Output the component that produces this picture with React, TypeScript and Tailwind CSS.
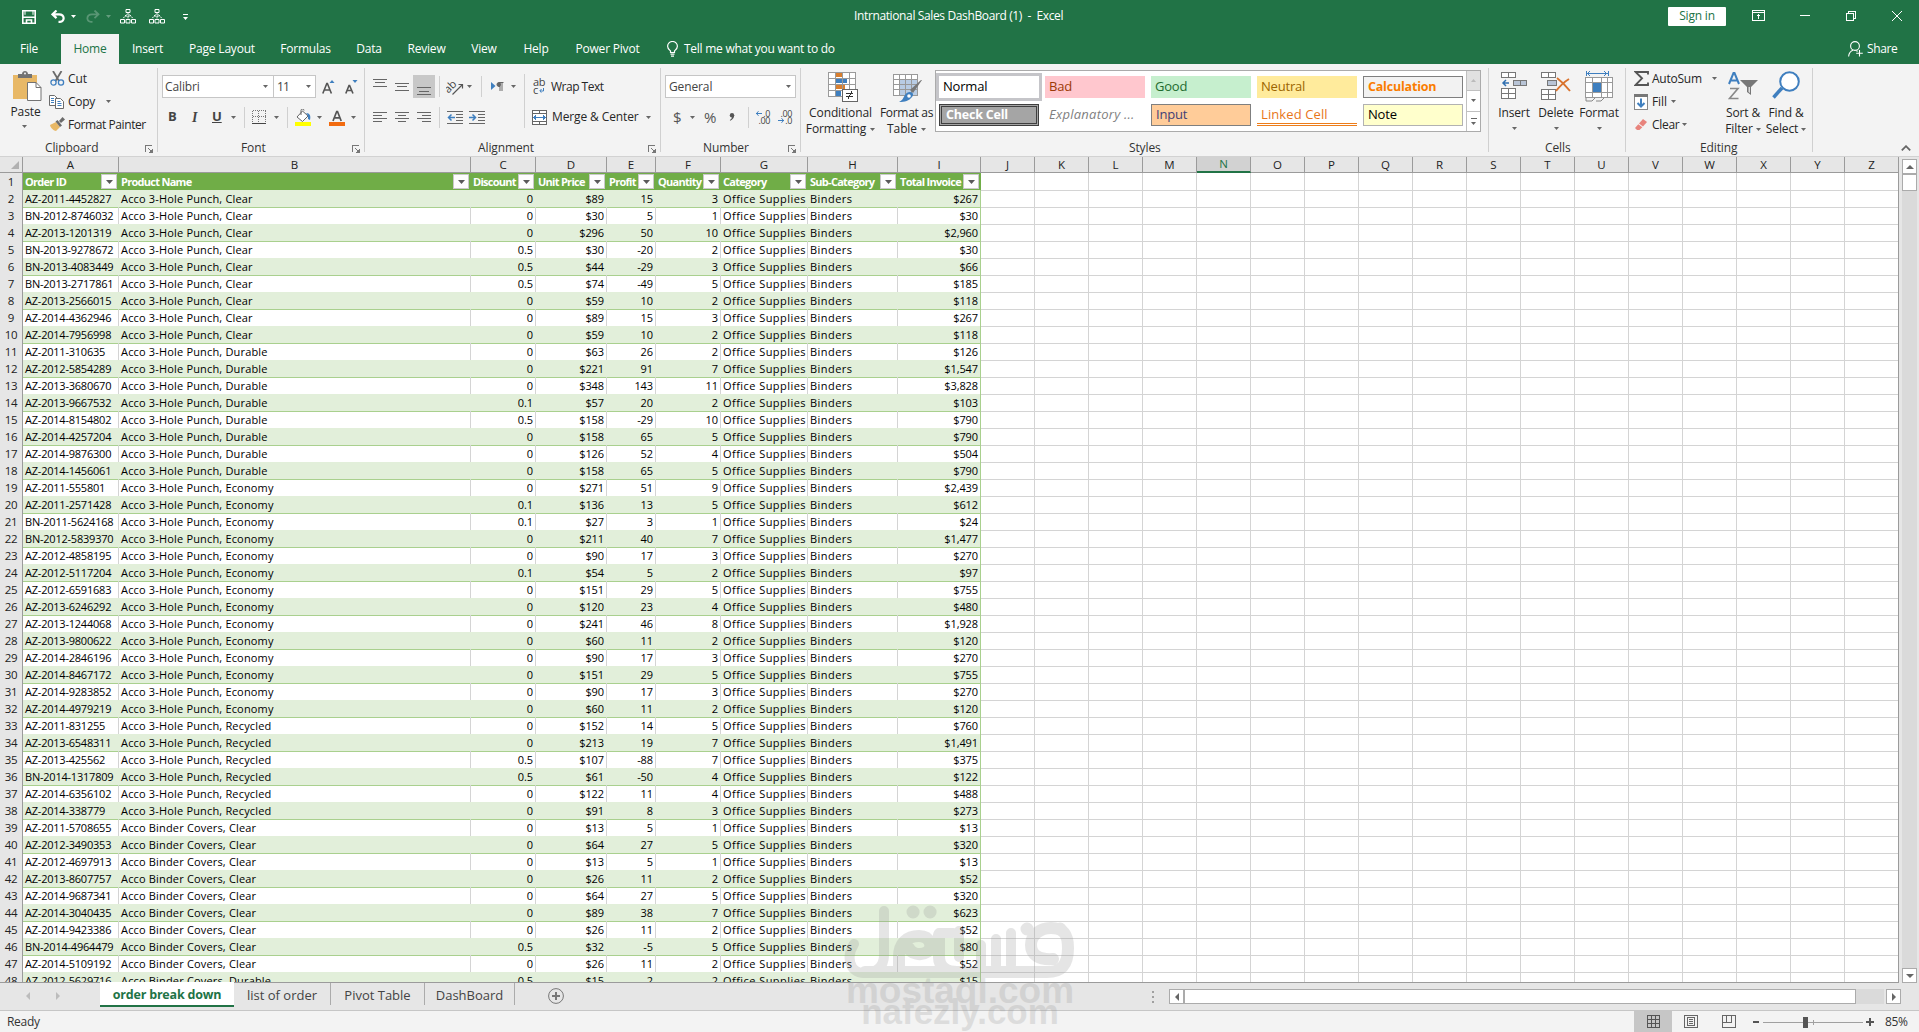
import React from "react";

type Row = [string, string, string, string, string, string, string];

const P = "Acco 3-Hole Punch, ";
const C = "Acco Binder Covers, ";

const DATA: Row[] = [
  ["AZ-2011-4452827", P + "Clear", "0", "$89", "15", "3", "$267"],
  ["BN-2012-8746032", P + "Clear", "0", "$30", "5", "1", "$30"],
  ["AZ-2013-1201319", P + "Clear", "0", "$296", "50", "10", "$2,960"],
  ["BN-2013-9278672", P + "Clear", "0.5", "$30", "-20", "2", "$30"],
  ["BN-2013-4083449", P + "Clear", "0.5", "$44", "-29", "3", "$66"],
  ["BN-2013-2717861", P + "Clear", "0.5", "$74", "-49", "5", "$185"],
  ["AZ-2013-2566015", P + "Clear", "0", "$59", "10", "2", "$118"],
  ["AZ-2014-4362946", P + "Clear", "0", "$89", "15", "3", "$267"],
  ["AZ-2014-7956998", P + "Clear", "0", "$59", "10", "2", "$118"],
  ["AZ-2011-310635", P + "Durable", "0", "$63", "26", "2", "$126"],
  ["AZ-2012-5854289", P + "Durable", "0", "$221", "91", "7", "$1,547"],
  ["AZ-2013-3680670", P + "Durable", "0", "$348", "143", "11", "$3,828"],
  ["AZ-2013-9667532", P + "Durable", "0.1", "$57", "20", "2", "$103"],
  ["AZ-2014-8154802", P + "Durable", "0.5", "$158", "-29", "10", "$790"],
  ["AZ-2014-4257204", P + "Durable", "0", "$158", "65", "5", "$790"],
  ["AZ-2014-9876300", P + "Durable", "0", "$126", "52", "4", "$504"],
  ["AZ-2014-1456061", P + "Durable", "0", "$158", "65", "5", "$790"],
  ["AZ-2011-555801", P + "Economy", "0", "$271", "51", "9", "$2,439"],
  ["AZ-2011-2571428", P + "Economy", "0.1", "$136", "13", "5", "$612"],
  ["BN-2011-5624168", P + "Economy", "0.1", "$27", "3", "1", "$24"],
  ["BN-2012-5839370", P + "Economy", "0", "$211", "40", "7", "$1,477"],
  ["AZ-2012-4858195", P + "Economy", "0", "$90", "17", "3", "$270"],
  ["AZ-2012-5117204", P + "Economy", "0.1", "$54", "5", "2", "$97"],
  ["AZ-2012-6591683", P + "Economy", "0", "$151", "29", "5", "$755"],
  ["AZ-2013-6246292", P + "Economy", "0", "$120", "23", "4", "$480"],
  ["AZ-2013-1244068", P + "Economy", "0", "$241", "46", "8", "$1,928"],
  ["AZ-2013-9800622", P + "Economy", "0", "$60", "11", "2", "$120"],
  ["AZ-2014-2846196", P + "Economy", "0", "$90", "17", "3", "$270"],
  ["AZ-2014-8467172", P + "Economy", "0", "$151", "29", "5", "$755"],
  ["AZ-2014-9283852", P + "Economy", "0", "$90", "17", "3", "$270"],
  ["AZ-2014-4979219", P + "Economy", "0", "$60", "11", "2", "$120"],
  ["AZ-2011-831255", P + "Recycled", "0", "$152", "14", "5", "$760"],
  ["AZ-2013-6548311", P + "Recycled", "0", "$213", "19", "7", "$1,491"],
  ["AZ-2013-425562", P + "Recycled", "0.5", "$107", "-88", "7", "$375"],
  ["BN-2014-1317809", P + "Recycled", "0.5", "$61", "-50", "4", "$122"],
  ["AZ-2014-6356102", P + "Recycled", "0", "$122", "11", "4", "$488"],
  ["AZ-2014-338779", P + "Recycled", "0", "$91", "8", "3", "$273"],
  ["AZ-2011-5708655", C + "Clear", "0", "$13", "5", "1", "$13"],
  ["AZ-2012-3490353", C + "Clear", "0", "$64", "27", "5", "$320"],
  ["AZ-2012-4697913", C + "Clear", "0", "$13", "5", "1", "$13"],
  ["AZ-2013-8607757", C + "Clear", "0", "$26", "11", "2", "$52"],
  ["AZ-2014-9687341", C + "Clear", "0", "$64", "27", "5", "$320"],
  ["AZ-2014-3040435", C + "Clear", "0", "$89", "38", "7", "$623"],
  ["AZ-2014-9423386", C + "Clear", "0", "$26", "11", "2", "$52"],
  ["BN-2014-4964479", C + "Clear", "0.5", "$32", "-5", "5", "$80"],
  ["AZ-2014-5109192", C + "Clear", "0", "$26", "11", "2", "$52"],
  ["AZ-2012-5629716", C + "Durable", "0.5", "$15", "-2", "2", "$15"],
];

const HEADERS = ["Order ID", "Product Name", "Discount", "Unit Price", "Profit", "Quantity", "Category", "Sub-Category", "Total Invoice"];
const LETTERS = "ABCDEFGHIJKLMNOPQRSTUVWXYZ".split("");
const GRID = "grid grid-cols-[23px_96px_352px_65px_71px_49px_65px_87px_90px_83px_repeat(17,54px)]";

const Caret = ({ className = "" }: { className?: string }) => (
  <svg className={"h-[3px] w-[5px] shrink-0 text-[#666] " + className} viewBox="0 0 5 3" fill="currentColor">
    <path d="M0 0h5L2.5 3z" />
  </svg>
);

const VSep = ({ className }: { className: string }) => <div className={"w-px shrink-0 bg-[#d0d0d0] " + className} />;

const Launcher = ({ className = "" }: { className?: string }) => (
  <svg className={"size-[8px] shrink-0 " + className} viewBox="0 0 8 8" fill="none" stroke="#777" shapeRendering="crispEdges">
    <path d="M.5 6.5v-6h6" />
    <path d="M3 3l3 3M7.5 3.500v4h-4" />
    <path d="M5 7h2V5z" fill="#777" />
  </svg>
);

function Group({ width, label, labelPad, launcher, children }: { width: string; label: string; labelPad: string; launcher?: boolean; children: React.ReactNode }) {
  return (
    <section className={"flex h-[92px] shrink-0 " + width}>
      <div className="flex min-w-0 flex-1 flex-col">
        <div className="h-[76px]">{children}</div>
        <div className={"flex h-[16px] items-center " + labelPad}>
          <span className="whitespace-nowrap text-[#333]">{label}</span>
          {launcher && <Launcher className="ml-auto mr-[4px] mt-[2px]" />}
        </div>
      </div>
      <div className="mt-[4px] h-[84px] w-px bg-[#d0d0d0]" />
    </section>
  );
}

const QatTree = ({ className }: { className: string }) => (
  <svg className={"h-[15px] w-[16px] shrink-0 " + className} viewBox="0 0 16 15" fill="none" stroke="#fff">
    <path d="M6 .5h4v3H6zM.5 10.500h4v3.500h-4zM6 10.500h4v3.500H6zM11.500 10.500h4v3.500h-4z" />
    <path d="M8 4v6M6.500 5.500L3 9.500M9.500 5.500L13 9.500M5 7h6" strokeDasharray="2 .8" />
  </svg>
);

function TitleBar() {
  return (
    <div className="flex h-[32px] items-center text-white">
      <svg className="ml-[22px] mt-[2px] size-[14px]" viewBox="0 0 14 14" fill="none" stroke="#fff" strokeWidth="1.600">
        <path d="M.8.8h12.400v12.400H.8z" />
        <path d="M1 7.200h12M4.500 13V10h5v3" />
        <path d="M3 .8v4M11 .8v4" strokeWidth="1" />
      </svg>
      <svg className="ml-[15px] h-[13px] w-[14px]" viewBox="0 0 14 13" fill="none" stroke="#fff" strokeWidth="2.200">
        <path d="M5.500.5L1.500 4.300l4 3.800M2 4.300h6c6 0 6 7.500 1 7.500H7.500" />
      </svg>
      <Caret className="ml-[6px] text-white" />
      <svg className="ml-[10px] h-[13px] w-[14px] opacity-25" viewBox="0 0 14 13" fill="none" stroke="#fff" strokeWidth="1.800">
        <path d="M8.500.5l4 3.800-4 3.800M12 4.300H6c-6 0-6 7.500-1 7.500h1.500" />
      </svg>
      <Caret className="ml-[6px] text-white opacity-30" />
      <QatTree className="ml-[9px]" />
      <QatTree className="ml-[13px]" />
      <svg className="ml-[18px] mt-[2px] h-[6px] w-[5px]" viewBox="0 0 5 6" fill="#fff">
        <path d="M0 0h5v1H0zM0 3h5L2.500 6z" />
      </svg>
      <div className="ml-[666px] w-[213px] whitespace-pre text-[12px] tracking-[-0.37px]">Intrnational Sales DashBoard (1)  -  Excel</div>
      <div className="ml-[601px] flex h-[19px] w-[58px] items-center justify-center rounded-[1px] bg-white text-[12px] tracking-[-0.2px] text-[#217346]">Sign in</div>
      <svg className="-mt-px ml-[26px] h-[11px] w-[13px]" viewBox="0 0 13 11" fill="none" stroke="#fff" shapeRendering="crispEdges">
        <path d="M.5.5h12v10H.5zM.5 2.500h12M6.500 4v5" />
        <path d="M4.500 6.500l2-2 2 2" />
      </svg>
      <svg className="-mt-px ml-[35px] h-[11px] w-[10px]" viewBox="0 0 10 11" stroke="#fff" shapeRendering="crispEdges"><path d="M0 5.500h10" /></svg>
      <svg className="-mt-px ml-[36px] size-[10px]" viewBox="0 0 10 10" fill="none" stroke="#fff" shapeRendering="crispEdges"><path d="M.5 2.500h7v7h-7zM2.500 2V.5h7v7H8" /></svg>
      <svg className="-mt-px ml-[36px] size-[10px]" viewBox="0 0 10 10" fill="none" stroke="#fff"><path d="M0 0l10 10M10 0L0 10" /></svg>
    </div>
  );
}

const TABS: [string, string][] = [
  ["Insert", "w-[57px]"],
  ["Page Layout", "w-[92px]"],
  ["Formulas", "w-[75px]"],
  ["Data", "w-[52px]"],
  ["Review", "w-[63px]"],
  ["View", "w-[52px]"],
  ["Help", "w-[52px]"],
  ["Power Pivot", "w-[91px]"],
];

function TabBar() {
  return (
    <div className="flex h-[32px] items-center pt-px text-[12px] tracking-[-0.2px] text-white">
      <div className="w-[61px] pr-[3px] text-center">File</div>
      <div className="mt-[1px] flex h-[30px] w-[58px] items-center justify-center self-start bg-[#f3f3f3] text-[#217346]">Home</div>
      {TABS.map(([t, w]) => (
        <div key={t} className={"whitespace-nowrap text-center " + w}>{t}</div>
      ))}
      <svg className="ml-[14px] h-[16px] w-[11px]" viewBox="0 0 11 16" fill="none" stroke="#fff" strokeWidth="1.200">
        <path d="M3.500 11.500V10C2 8.500.6 7.500.6 5.200a4.900 4.700 0 019.800 0c0 2.300-1.400 3.300-2.900 4.800v1.500zM3.500 13.200h4M4 15.200h3" />
      </svg>
      <div className="ml-[6px] w-[160px] whitespace-nowrap tracking-[-0.26px]">Tell me what you want to do</div>
      <svg className="ml-[1004px] h-[16px] w-[15px]" viewBox="0 0 15 16" fill="none" stroke="#fff" strokeWidth="1.100">
        <circle cx="7" cy="5" r="4.400" />
        <path d="M.6 15.500C1 11.500 3 10 5 9.300M8.500 9.500l1 1M11.500 9v6.500M8.200 12.300h6.600" />
      </svg>
      <div className="ml-[4px] tracking-[-0.4px]">Share</div>
    </div>
  );
}

function ClipboardGroup() {
  return (
    <Group width="w-[158px]" label="Clipboard" labelPad="pl-[45px]" launcher>
      <div className="flex pt-[3px]">
        <div className="flex w-[49px] flex-col items-center pt-[4px]">
          <svg className="ml-[5px] h-[31px] w-[29px]" viewBox="0 0 29 31">
            <path d="M0 4h24v24H0z" fill="#e8b866" />
            <path d="M5 7V3h4c0-4 6-4 6 0h4v4z" fill="#737373" />
            <circle cx="12" cy="2.500" r="1" fill="#f3f3f3" />
            <path d="M14.500 11.500h8.500l5 5v13H14.500z" fill="#fff" stroke="#737373" />
            <path d="M23 11.500v5h5" fill="none" stroke="#737373" />
          </svg>
          <span className="ml-[2px] mt-[2px] h-[17px] leading-[16px]">Paste</span>
          <Caret className="mt-[4px]" />
        </div>
        <div className="flex-1">
          <div className="flex h-[23px] items-center">
            <svg className="ml-[1px] size-[15px]" viewBox="0 0 15 15" fill="none">
              <path d="M3 0l6 10M11.500 0l-6 10" stroke="#6b6b6b" strokeWidth="1.800" />
              <circle cx="3.500" cy="11.500" r="2.600" stroke="#3f7fbf" strokeWidth="1.300" />
              <circle cx="11" cy="11.500" r="2.600" stroke="#3f7fbf" strokeWidth="1.300" />
            </svg>
            <span className="ml-[3px]">Cut</span>
          </div>
          <div className="flex h-[23px] items-center">
            <svg className="h-[14px] w-[15px]" viewBox="0 0 15 14" fill="#fff" stroke="#6b6b6b">
              <path d="M.5.5h5l3 3v7h-8z" />
              <path d="M6.500 3.500h5l3 3v7h-8z" />
              <path d="M2 3.500h3M2 5.500h3M2 7.500h3M8.500 6.500h3M8.500 8.500h4M8.500 10.500h4" stroke="#3f7fbf" />
            </svg>
            <span className="ml-[4px] w-[38px] tracking-[-0.3px]">Copy</span>
            <Caret />
          </div>
          <div className="flex h-[23px] items-center">
            <svg className="ml-[1px] size-[15px]" viewBox="0 0 15 15">
              <path d="M0 8l6-3 4 5-4 4c-2-.5-5-2-6-6z" fill="#e8b866" />
              <path d="M5.500 4.500l2-1.500 4.500 5.500-2 1.500z" fill="#6b6b6b" />
              <path d="M9 4l3.500-4 2.500 2.500-4 3.500z" fill="#6b6b6b" />
            </svg>
            <span className="ml-[3px] whitespace-nowrap tracking-[-0.42px]">Format Painter</span>
          </div>
        </div>
      </div>
    </Group>
  );
}

function FontGroup() {
  return (
    <Group width="w-[207px]" label="Font" labelPad="pl-[83px]" launcher>
      <div className="flex h-[34px] items-center pl-[4px] pt-[11px] text-[#444]">
        <div className="flex h-[23px] w-[112px] items-center border border-[#c6c6c6] bg-white pl-[2px] pr-[5px]">
          <span className="flex-1">Calibri</span><Caret />
        </div>
        <div className="-ml-px flex h-[23px] w-[43px] items-center border border-[#c6c6c6] bg-white pl-[3px] pr-[4px]">
          <span className="flex-1 tracking-[-0.9px]">11</span><Caret />
        </div>
        <svg className="ml-[6px] h-[14px] w-[13px]" viewBox="0 0 13 14">
          <path d="M.8 13.500L4.800 3.500h.6l4 10M2.300 10h5.500" fill="none" stroke="#555" strokeWidth="1.600" />
          <path d="M7.500 3h5L10 0z" fill="#3f7fbf" />
        </svg>
        <svg className="ml-[10px] h-[14px] w-[13px]" viewBox="0 0 13 14">
          <path d="M.8 13.500L4 5.500h.6l3.400 8M2 10.500h4.500" fill="none" stroke="#555" strokeWidth="1.600" />
          <path d="M7.500 0h5L10 3z" fill="#3f7fbf" />
        </svg>
      </div>
      <div className="mt-[8px] flex h-[22px] items-center pl-[10px] text-[13px] text-[#444]">
        <b className="w-[22px]">B</b>
        <i className="w-[22px] pl-[2px] font-['Liberation_Serif'] text-[14px] font-bold">I</i>
        <b className="w-[19px] underline">U</b>
        <Caret />
        <VSep className="ml-[8px] h-[21px]" />
        <svg className="ml-[7px] size-[14px]" viewBox="0 0 14 14" stroke="#777" fill="none" shapeRendering="crispEdges">
          <path d="M.5.500h13M.5 6.500h13M.5.500v13M6.500.5v13M13.500.5v13" strokeDasharray="1 1" />
          <path d="M0 13.500h14" stroke="#444" />
        </svg>
        <Caret className="ml-[8px]" />
        <VSep className="ml-[8px] h-[21px]" />
        <svg className="ml-[7px] h-[17px] w-[17px]" viewBox="0 0 17 17">
          <path d="M2 8l5.500-6 5.500 5-5.500 5.500z" fill="#fff" stroke="#666" />
          <path d="M6 6V1.500a1.500 1.500 0 013 0" fill="none" stroke="#666" />
          <path d="M11 4c4 0 5 3 4 7l-2-1c0-3 0-4-2-6z" fill="#3f7fbf" />
          <path d="M0 13h16v4H0z" fill="#ffff00" />
        </svg>
        <Caret className="ml-[5px]" />
        <svg className="ml-[7px] h-[17px] w-[16px]" viewBox="0 0 16 17">
          <path d="M4 12L7.700 2.500h.8L12.200 12M5.500 8.800h5.200" fill="none" stroke="#555" strokeWidth="1.700" />
          <path d="M0 13h16v4H0z" fill="#f26b0f" />
        </svg>
        <Caret className="ml-[6px]" />
      </div>
    </Group>
  );
}

const Lines = ({ d, className }: { d: string; className: string }) => (
  <svg className={"h-[22px] w-[14px] shrink-0 " + className} viewBox="0 0 14 22" stroke="#666" shapeRendering="crispEdges"><path d={d} /></svg>
);

const Indent = ({ flip, className }: { flip?: boolean; className: string }) => (
  <svg className={"h-[13px] w-[16px] shrink-0 " + className} viewBox="0 0 16 13" fill="none">
    <path d="M0 .5h16M9 3.500h7M9 6.500h7M9 9.500h7M0 12.500h16" stroke="#666" />
    <path d={flip ? "M0 6.500h6.500M3.500 3.500l3 3-3 3" : "M1 6.500h7M4.500 3.500l-3 3 3 3"} stroke="#3f7fbf" strokeWidth="1.500" />
  </svg>
);

function AlignmentGroup() {
  return (
    <Group width="w-[296px]" label="Alignment" labelPad="pl-[113px]" launcher>
      <div className="flex">
        <div className="w-[159px]">
          <div className="flex h-[34px] items-center pt-[11px]">
            <Lines className="ml-[8px]" d="M0 3.500h14M2 6.500h10M0 10.500h14" />
            <Lines className="ml-[8px]" d="M0 7.500h14M2 10.500h10M0 14.500h14" />
            <div className="ml-[4px] flex h-[23px] w-[22px] items-center justify-center bg-[#c8c8c8]">
              <Lines className="" d="M0 11.500h14M2 15.500h10M0 18.500h14" />
            </div>
            <VSep className="ml-[4px] h-[21px]" />
            <svg className="ml-[6px] h-[16px] w-[18px]" viewBox="0 0 18 16" fill="none" stroke="#555" strokeWidth="1.200">
              <text x="-1" y="11" fontSize="11" fill="#444" stroke="none" transform="rotate(-45 5 9)">ab</text>
              <path d="M6.500 15.500L16.500 5.500M12.500 5.500h4v4" />
            </svg>
            <Caret className="ml-[3px]" />
            <VSep className="ml-[9px] h-[21px]" />
            <svg className="ml-[9px] h-[10px] w-[13px]" viewBox="0 0 13 10">
              <path d="M0 0l4.500 4L0 8z" fill="#3f7fbf" />
              <path d="M12.500.5H8a2 2 0 000 4h1M9 .5V9M11 .5V9" stroke="#666" fill="none" />
              <circle cx="8" cy="2.500" r="2" fill="#666" />
            </svg>
            <Caret className="ml-[7px]" />
          </div>
          <div className="mt-[8px] flex h-[22px] items-center">
            <Lines className="ml-[8px]" d="M0 6.500h14M0 9.500h9M0 12.500h14M0 15.500h9" />
            <Lines className="ml-[8px]" d="M0 6.500h14M3 9.500h8M0 12.500h14M3 15.500h8" />
            <Lines className="ml-[8px]" d="M0 6.500h14M5 9.500h9M0 12.500h14M5 15.500h9" />
            <VSep className="ml-[8px] h-[21px]" />
            <Indent className="ml-[7px]" />
            <Indent className="ml-[6px]" flip />
          </div>
        </div>
        <VSep className="mt-[10px] h-[54px]" />
        <div>
          <div className="mt-[11px] flex h-[23px] items-center">
            <div className="ml-[8px] flex h-[18px] w-[15px] flex-col text-[11px] leading-[8px] text-[#444]">
              <span className="tracking-[-0.3px]">ab</span>
              <span className="flex items-center">c
                <svg className="ml-[1px] mt-[2px] size-[5px]" viewBox="0 0 5 5" fill="none" stroke="#3f7fbf"><path d="M4.500 0v3H1M2.500 1L.8 3l1.700 1.700" /></svg>
              </span>
            </div>
            <span className="ml-[3px] whitespace-nowrap tracking-[-0.5px]">Wrap Text</span>
          </div>
          <div className="mt-[8px] flex h-[22px] items-center">
            <svg className="ml-[7px] size-[15px]" viewBox="0 0 15 15" fill="none" stroke="#666" shapeRendering="crispEdges">
              <path d="M.5.500h14v14H.5zM.5 3.500h14M.5 11.500h14M7.500.5v3M7.500 11.500v3" fill="#fff" />
              <path d="M2 7.500h11M4 5.500l-2 2 2 2M11 5.500l2 2-2 2" stroke="#3f7fbf" />
            </svg>
            <span className="ml-[5px] w-[94px] whitespace-nowrap">Merge &amp; Center</span>
            <Caret />
          </div>
        </div>
      </div>
    </Group>
  );
}

const Decimals = ({ more, className }: { more?: boolean; className: string }) => (
  <div className={"flex w-[15px] flex-col text-[9px] leading-[7px] tracking-[-0.4px] text-[#444] " + className}>
    <span className="flex items-center justify-end">
      {!more && <svg className="mr-[1px] h-[5px] w-[6px]" viewBox="0 0 6 5" fill="none" stroke="#3f7fbf"><path d="M0 2.500h6M2.500.2L.5 2.500l2 2.300" /></svg>}
      {more ? ".00" : ".0"}
    </span>
    <span className="flex items-center justify-end">
      {more && <svg className="mr-[1px] h-[5px] w-[6px]" viewBox="0 0 6 5" fill="none" stroke="#3f7fbf"><path d="M0 2.500h6M3.500.2l2 2.300-2 2.300" /></svg>}
      {more ? ".0" : ".00"}
    </span>
  </div>
);

function NumberGroup() {
  return (
    <Group width="w-[140px]" label="Number" labelPad="pl-[42px]" launcher>
      <div className="ml-[4px] pt-[11px]">
        <div className="flex h-[23px] w-[131px] items-center border border-[#c6c6c6] bg-white pl-[3px] pr-[4px] text-[#444]">
          <span className="flex-1">General</span><Caret />
        </div>
      </div>
      <div className="mt-[8px] flex h-[22px] items-center pl-[12px] text-[#555]">
        <span className="w-[17px] text-[15px]">$</span>
        <Caret />
        <span className="ml-[9px] w-[25px] text-[15px]">%</span>
        <svg className="h-[8px] w-[6px]" viewBox="0 0 6 8"><circle cx="3" cy="2.200" r="2.200" fill="#555" /><path d="M5.200 2c0 3-1.500 4.500-4 5.800L.8 7C2.500 6 3 5 3 3.500z" fill="#555" /></svg>
        <VSep className="ml-[13px] h-[21px]" />
        <Decimals className="ml-[6px]" />
        <Decimals className="ml-[7px]" more />
      </div>
    </Group>
  );
}

function StylesGroup() {
  const base = "flex h-[22px] w-[100px] items-center whitespace-nowrap pl-[4px] ";
  return (
    <Group width="w-[688px]" label="Styles" labelPad="pl-[328px]">
      <div className="flex">
        <div className="flex w-[74px] flex-col items-center pl-[5px] pt-[8px] leading-[16px]">
          <svg className="ml-[4px] size-[30px]" viewBox="0 0 30 30" shapeRendering="crispEdges">
            <path d="M0 0h28v25H0z" fill="#fff" />
            <path d="M8 0h7v5H8z" fill="#d97f2e" /><path d="M8 7h11v4H8z" fill="#3f7fbf" /><path d="M8 13h9v4H8z" fill="#d97f2e" /><path d="M8 19h5v5H8z" fill="#3f7fbf" />
            <path d="M.5.500h27v24H.5zM.5 6.500h27M.5 12.500h27M.5 18.500h27M7.500.5v24M14.500.5v24M21.500.5v24" fill="none" stroke="#9a9a9a" />
            <path d="M14.500 17.500h15v12h-15z" fill="#fff" stroke="#666" />
            <path d="M18 21.500h7M18 24.500h7M24 19.500l-4 7" stroke="#333" />
          </svg>
          <span className="mt-[3px] whitespace-nowrap">Conditional</span>
          <span className="flex items-center whitespace-nowrap">Formatting<Caret className="ml-[4px]" /></span>
        </div>
        <div className="flex w-[60px] flex-col items-center pl-[3px] pt-[8px] leading-[16px]">
          <svg className="ml-[2px] size-[30px]" viewBox="0 0 30 30">
            <path d="M.5 2.500h24v21H.5z" fill="#fff" />
            <path d="M7 8h17v15H7z" fill="#b8cce4" />
            <path d="M.5 2.500h24v21H.5zM.5 7.500h24M.5 12.500h24M.5 17.500h24M6.500 2.500v21M12.500 2.500v21M18.500 2.500v21" fill="none" stroke="#999" shapeRendering="crispEdges" />
            <path d="M29 8l-9 13-3-3L28 8z" fill="#777" />
            <path d="M17 20c3 0 4 3 2 5-3 4-7 5-13 5 4-2 4-4 6-7 1-2 3-3 5-3z" fill="#3f7fbf" />
            <circle cx="16" cy="24" r="1.800" fill="#fff" />
          </svg>
          <span className="mt-[3px] whitespace-nowrap tracking-[-0.3px]">Format as</span>
          <span className="flex items-center">Table<Caret className="ml-[4px]" /></span>
        </div>
        <div className="mt-[6px] flex h-[62px] w-[546px] border border-[#ababab] bg-white text-[13px] tracking-[-0.2px]">
          <div className="grid flex-1 grid-cols-[repeat(5,100px)] grid-rows-[22px_22px] gap-x-[6px] gap-y-[6px] pl-[3px] pt-[5px]">
            <div className={base + "bg-white text-black outline-3 outline-[#c5c5c9]"}>Normal</div>
            <div className={base + "bg-[#ffc7ce] text-[#9c3a06]"}>Bad</div>
            <div className={base + "bg-[#c6efce] text-[#1e6b2e]"}>Good</div>
            <div className={base + "bg-[#ffeb9c] text-[#9c6500]"}>Neutral</div>
            <div className={base + "border border-[#7f7f7f] bg-[#f2f2f2] pl-[3px] text-[12.500px] font-bold text-[#fa7d00]"}>Calculation</div>
            <div className={base + "border-3 border-double border-[#3f3f3f] bg-[#a5a5a5] pl-[1px] text-[12.500px] font-bold text-white"}>Check Cell</div>
            <div className={base + "italic tracking-[0.25px] text-[#7f7f7f]"}>Explanatory ...</div>
            <div className={base + "border border-[#7f7f7f] bg-[#ffcc99] pl-[3px] text-[#3f3f76]"}>Input</div>
            <div className={base + "border-b-3 border-double border-[#ed7d1a] pt-[3px] tracking-[0.1px] text-[#e8761a]"}>Linked Cell</div>
            <div className={base + "border border-[#b2b2b2] bg-[#ffffcc] pl-[3px] text-black"}>Note</div>
          </div>
          <div className="flex w-[14px] flex-col border-l border-[#c0c0c0]">
            <div className="flex flex-1 items-center justify-center bg-[#e1e1e1]"><Caret className="rotate-180 opacity-30" /></div>
            <div className="flex flex-1 items-center justify-center border-y border-[#c0c0c0]"><Caret /></div>
            <div className="flex flex-1 flex-col items-center justify-center gap-[3px]"><div className="h-px w-[6px] bg-[#666]" /><Caret /></div>
          </div>
        </div>
      </div>
    </Group>
  );
}

function BigButton({ icon, lines, width }: { icon: React.ReactNode; lines: [string, string?]; width: string }) {
  return (
    <div className={"flex shrink-0 flex-col items-center pt-[6px] leading-[16px] " + width}>
      <div className="h-[32px]">{icon}</div>
      <span className="mt-[3px] whitespace-nowrap">{lines[0]}</span>
      {lines[1] ? (
        <span className="flex items-center whitespace-nowrap">{lines[1]}<Caret className="ml-[3px]" /></span>
      ) : (
        <Caret className="mt-[6px]" />
      )}
    </div>
  );
}

function CellsGroup() {
  return (
    <Group width="w-[137px]" label="Cells" labelPad="pl-[56px]">
      <div className="flex pl-[4px]">
        <BigButton width="w-[42px]" lines={["Insert"]} icon={
          <svg className="mt-[2px] h-[28px] w-[27px]" viewBox="0 0 27 28" fill="#fff" stroke="#777" shapeRendering="crispEdges">
            <path d="M.5.500h14v5H.5zM7.500.5v5M.5 16.500h14v10H.5zM.5 21.500h14M7.500 16.500v10" />
            <path d="M12.500 8.500h13v5h-13zM19.500 8.500v5" fill="#b8c4d6" />
            <path d="M2 11h6M5 8l-3 3 3 3" fill="none" stroke="#2f6fb0" strokeWidth="1.500" shapeRendering="auto" />
          </svg>} />
        <BigButton width="w-[42px]" lines={["Delete"]} icon={
          <svg className="mt-[2px] h-[28px] w-[30px]" viewBox="0 0 30 28" fill="#fff" stroke="#777" shapeRendering="crispEdges">
            <path d="M.5.500h14v5H.5zM7.500.5v5M.5 17.500h14v10H.5zM.5 22.500h14M7.500 17.500v10" />
            <path d="M6.500 8.500h9v5h-9z" fill="#b8c4d6" />
            <path d="M16 6c4 3 9 8 13 13M28 7c-5 3-9 7-13 12" fill="none" stroke="#d9732e" strokeWidth="1.900" shapeRendering="auto" />
          </svg>} />
        <BigButton width="w-[44px]" lines={["Format"]} icon={
          <svg className="h-[32px] w-[29px]" viewBox="0 0 29 32" fill="none" stroke="#999" shapeRendering="crispEdges">
            <path d="M1 1v5M23 1v5M3 3.500h18M5 1.500l-3 2 3 2M19 1.500l3 2-3 2" stroke="#3f7fbf" />
            <path d="M.5 7.500h27v20H.5zM.5 12.500h27M.5 22.500h27M7.500 7.500v20M16.500 7.500v20M22.500 7.500v20" fill="#fff" />
            <path d="M8 13h8v9H8z" fill="#3f7fbf" stroke="none" />
            <path d="M1 28v3h6l3-3M11 31h5l3-3" stroke="#888" shapeRendering="auto" />
          </svg>} />
      </div>
    </Group>
  );
}

function EditingGroup() {
  return (
    <Group width="w-[187px]" label="Editing" labelPad="pl-[74px]">
      <div className="flex">
        <div className="w-[96px] pl-[8px] pt-[3px]">
          <div className="flex h-[23px] items-center">
            <svg className="h-[15px] w-[15px] shrink-0" viewBox="0 0 15 15" fill="none" stroke="#555" strokeWidth="1.900"><path d="M14 3.500V1H1.500L8 7.300 1.500 14H14v-2.500" /></svg>
            <span className="ml-[3px] w-[60px] tracking-[-0.25px]">AutoSum</span>
            <Caret />
          </div>
          <div className="flex h-[23px] items-center">
            <svg className="h-[16px] w-[14px]" viewBox="0 0 14 16" shapeRendering="crispEdges">
              <path d="M.5 2.500h13v13H.5z" fill="#fff" stroke="#888" /><path d="M0 0h14v3H0z" fill="#777" />
              <path d="M7 4.500v8M3.500 9L7 12.500 10.500 9" fill="none" stroke="#3f7fbf" strokeWidth="2" shapeRendering="auto" />
            </svg>
            <span className="ml-[4px]">Fill</span><Caret className="ml-[4px]" />
          </div>
          <div className="flex h-[23px] items-center">
            <svg className="h-[14px] w-[14px]" viewBox="0 0 14 14"><path d="M9 1l4 3-4 4.500-4-3z" fill="#e8837c" /><path d="M4.300 6.200l4 3L5.500 12H3L1 10z" fill="#e8837c" /></svg>
            <span className="ml-[4px] tracking-[-0.3px]">Clear</span><Caret className="ml-[3px]" />
          </div>
        </div>
        <BigButton width="w-[42px]" lines={["Sort &", "Filter"]} icon={
          <svg className="mt-[2px] h-[28px] w-[30px]" viewBox="0 0 30 28" fill="none">
            <path d="M1 12L5.500 1h1L11 12M2.800 8.500h6.400" stroke="#3f7fbf" strokeWidth="2" />
            <path d="M2 16.500h8L1.500 26.500h9" stroke="#888" strokeWidth="1.600" />
            <path d="M12 8h18l-7 7v8l-4-3v-5z" fill="#777" />
            <path d="M20.500 15h1.500v6l-1.500-1z" fill="#ddd" />
          </svg>} />
        <BigButton width="w-[44px]" lines={["Find &", "Select"]} icon={
          <svg className="mt-[1px] h-[29px] w-[28px]" viewBox="0 0 28 29" fill="none" stroke="#3f7fbf">
            <path d="M10 17L1.500 26.500" strokeWidth="3.500" />
            <circle cx="17.500" cy="10.500" r="9.300" fill="#fff" strokeWidth="2" />
          </svg>} />
      </div>
    </Group>
  );
}

function Ribbon() {
  return (
    <div className="flex h-[93px] border-b border-[#d2d2d2] bg-[#f3f3f3] text-[12px] tracking-[-0.12px] text-[#262626]">
      <ClipboardGroup />
      <FontGroup />
      <AlignmentGroup />
      <NumberGroup />
      <StylesGroup />
      <CellsGroup />
      <EditingGroup />
      <svg className="ml-[88px] mt-[81px] h-[6px] w-[10px]" viewBox="0 0 10 6" fill="none" stroke="#666" strokeWidth="1.800"><path d="M.8 5.300L5 1.200l4.200 4.100" /></svg>
    </div>
  );
}

function Sheet() {
  return (
    <div className="w-[1899px]">
      <div className={GRID + " h-[16px] text-[11.500px] text-[#222]"}>
        <div className="flex justify-end border-b border-r border-[#9b9b9b] bg-[#e6e6e6] pr-[3px] pt-[4px]">
          <svg className="size-[8px]" viewBox="0 0 8 8"><path d="M8 0v8H0z" fill="#b1b1b1" /></svg>
        </div>
        {LETTERS.map((l) => (
          <div key={l} className={l === "N" ? "flex items-center justify-center border-b-2 border-r border-[#217346] border-r-[#9b9b9b] bg-[#d2d2d2] text-[#217346]" : "flex items-center justify-center border-b border-r border-[#9b9b9b] bg-[#e6e6e6]"}>
            <span className="leading-[14px]">{l}</span>
          </div>
        ))}
      </div>
      <div className="h-[810px] overflow-hidden border-b border-r border-[#9b9b9b] bg-white text-[11px] leading-[16px] text-black">
        <div className={GRID + " h-[17px]"}>
          <RowNumber n={1} />
          {HEADERS.map((h) => (
            <div key={h} className="flex overflow-hidden border-b border-[#a9d08e] bg-[#70ad47] pl-[2px] font-bold text-white">
              <span className="min-w-0 flex-1 whitespace-nowrap pt-[1px] tracking-[-0.72px]">{h}</span>
              <span className="mr-[2px] mt-[1px] flex h-[15px] w-[16px] shrink-0 items-center justify-center border border-[#c9c9c9] bg-[#fdfdfd]">
                <svg className="h-[4px] w-[7px]" viewBox="0 0 7 4"><path d="M0 0h7L3.500 4z" fill="#595959" /></svg>
              </span>
            </div>
          ))}
          <Blank />
        </div>
        {DATA.map((r, i) => {
          const band = i % 2 === 0;
          const cell = "overflow-hidden whitespace-nowrap border-b border-r border-b-[#a9d08e] px-[2px] pt-px ";
          const tone = band ? "border-r-[#e2efda] bg-[#e2efda] " : "border-r-[#d4d4d4] ";
          const left = cell + tone;
          const right = cell + tone + "text-right tracking-[-0.1px]";
          return (
            <div key={r[0]} className={GRID + " h-[17px]"}>
              <RowNumber n={i + 2} />
              <div className={left + "tracking-[-0.22px]"}>{r[0]}</div>
              <div className={left + "tracking-[0.17px]"}>{r[1]}</div>
              <div className={right}>{r[2]}</div>
              <div className={right}>{r[3]}</div>
              <div className={right}>{r[4]}</div>
              <div className={right}>{r[5]}</div>
              <div className={left + "tracking-[0.45px]"}>Office Supplies</div>
              <div className={left + "tracking-[0.45px]"}>Binders</div>
              <div className={cell + "border-r-[#a9d08e] text-right tracking-[-0.1px] " + (band ? "bg-[#e2efda]" : "")}>{r[6]}</div>
              <Blank />
            </div>
          );
        })}
      </div>
    </div>
  );
}

const RowNumber = ({ n }: { n: number }) => (
  <div className="border-b border-r border-b-[#c9c9c9] border-r-[#9b9b9b] bg-[#e6e6e6] pt-px text-center text-[11.500px] tracking-[-0.3px] text-[#222]">{n}</div>
);

const Blank = () => (
  <>
    {LETTERS.slice(9).map((l) => <div key={l} className="border-b border-r border-[#d4d4d4]" />)}
  </>
);

const Arrow = ({ d, className = "fill-[#666]" }: { d: string; className?: string }) => (
  <svg className={"size-[8px] " + className} viewBox="0 0 8 8"><path d={d} /></svg>
);

function SheetTabs() {
  const tab = "mb-[5px] flex items-center justify-center border-r border-[#ababab] pt-[3px] ";
  return (
    <div className="flex h-[28px] border-b border-[#c6c6c6] bg-[#e6e6e6] text-[13px] text-[#444]">
      <div className="flex w-[100px] items-center gap-[22px] pb-[2px] pl-[24px]">
        <Arrow d="M6 0v8L2 4z" className="fill-[#bcbcbc]" />
        <Arrow d="M2 0v8l4-4z" className="fill-[#bcbcbc]" />
      </div>
      <div className="-mt-px flex h-[25px] w-[134px] items-center justify-center border-b-2 border-[#217346] bg-white pt-[4px] text-[12.500px] font-bold tracking-[-0.2px] text-[#217346]">order break down</div>
      <div className={tab + "w-[97px]"}>list of order</div>
      <div className={tab + "w-[94px]"}>Pivot Table</div>
      <div className={tab + "w-[90px]"}>DashBoard</div>
      <svg className="ml-[33px] mt-[5px] size-[16px]" viewBox="0 0 16 16" fill="none" stroke="#777"><circle cx="8" cy="8" r="7.400" /><path d="M8 4v8M4 8h8" strokeWidth="2" /></svg>
      <div className="ml-[588px] mt-[8px] flex flex-col gap-[3px]">
        <div className="size-[2px] bg-[#a0a0a0]" /><div className="size-[2px] bg-[#a0a0a0]" /><div className="size-[2px] bg-[#a0a0a0]" />
      </div>
      <div className="ml-[15px] mt-[6px] flex h-[15px] w-[732px] bg-[#dadada]">
        <div className="flex w-[15px] items-center justify-center border border-[#ababab] bg-white"><Arrow d="M6 0v8L2 4z" /></div>
        <div className="w-[672px] border border-[#ababab] bg-white" />
        <div className="ml-auto flex items-center border-l-2 border-[#e6e6e6]">
          <div className="flex size-[15px] items-center justify-center border border-[#ababab] bg-white"><Arrow d="M2 0v8l4-4z" /></div>
        </div>
      </div>
    </div>
  );
}

function StatusBar() {
  return (
    <div className="flex h-[21px] items-center bg-[#f3f3f3] text-[12px] tracking-[-0.3px] text-[#333]">
      <span className="ml-[7px] w-[1627px]">Ready</span>
      <div className="flex h-[21px] w-[38px] items-center justify-center bg-[#c6c6c6]">
        <svg className="size-[13px]" viewBox="0 0 13 13" fill="none" stroke="#555" shapeRendering="crispEdges"><path d="M.5.500h12v12H.5zM.5 4.500h12M.5 8.500h12M4.500.5v12M8.500.5v12" /></svg>
      </div>
      <svg className="ml-[12px] h-[13px] w-[14px]" viewBox="0 0 14 13" fill="none" stroke="#666" shapeRendering="crispEdges"><path d="M.5.500h13v12H.5zM3.500 2.500h7v8h-7zM5 4.500h4M5 6.500h4M5 8.500h4" /></svg>
      <svg className="ml-[24px] h-[13px] w-[14px]" viewBox="0 0 14 13" fill="none" stroke="#666" shapeRendering="crispEdges"><path d="M.5.500h13v12H.5zM4.500.5v7M9.500.5v7M.5 7.500h9" /></svg>
      <div className="ml-[17px] h-[2px] w-[6px] bg-[#555]" />
      <svg className="ml-[4px] h-[12px] w-[100px]" viewBox="0 0 100 12" shapeRendering="crispEdges"><path d="M0 6.500h100M50.500 4v5" stroke="#a0a0a0" /><path d="M40 1h5v11h-5z" fill="#555" /></svg>
      <svg className="ml-[3px] size-[8px]" viewBox="0 0 8 8" stroke="#555" strokeWidth="2"><path d="M4 0v8M0 4h8" /></svg>
      <span className="ml-[11px]">85%</span>
    </div>
  );
}

function Watermark() {
  return (
    <div className="pointer-events-none absolute left-[835px] top-[895px] flex w-[250px] flex-col items-center font-['Liberation_Sans'] font-bold text-[#9a9a9a] opacity-25">
      <svg className="h-[86px] w-[250px]" viewBox="0 0 250 86" fill="none" stroke="currentColor" strokeLinecap="round" strokeLinejoin="round">
        <path strokeWidth="10" d="M49 16v44c0 12-8 18-20 18-15 0-18-17-10-29" />
        <path strokeWidth="12" d="M30 77h95" />
        <path strokeWidth="12" d="M64 76V62c0-14 8-21 20-21s14 12 8 16-16 2-18-4M104 40v22c0 10 8 15 18 15h90c15 0 21-8 21-24s-6-20-17-20-20 7-20 17 8 15 22 14" />
        <path strokeWidth="10" d="M104 38h14M124 36v26M146 50v20M161 44v26M176 38v32" />
        <path strokeWidth="13" d="M78 17h.1M95 17h.1M192 34h.1M225 34h.1" />
      </svg>
      <div className="text-[37px] leading-[30px] -mt-[5px]">mostaql.com</div>
      <div className="-mt-[8px] text-[35px] leading-[28px]">nafezly.com</div>
    </div>
  );
}

export default function App() {
  return (
    <div className="relative flex h-[1032px] w-[1919px] flex-col overflow-hidden bg-[#e6e6e6] font-['Open_Sans',sans-serif]">
      <header className="h-[64px] bg-[#217346]">
        <TitleBar />
        <TabBar />
      </header>
      <Ribbon />
      <main className="flex h-[826px]">
        <Sheet />
        <div className="ml-[3px] mt-[2px] flex h-[824px] w-[15px] flex-col bg-[#dadada]">
          <div className="flex h-[15px] items-center justify-center border border-[#ababab] bg-white"><Arrow d="M0 6h8L4 2z" /></div>
          <div className="h-[17px] border border-[#ababab] bg-white" />
          <div className="mt-auto flex h-[15px] items-center justify-center border border-[#ababab] bg-white"><Arrow d="M0 2h8L4 6z" /></div>
        </div>
      </main>
      <SheetTabs />
      <StatusBar />
      <Watermark />
    </div>
  );
}
